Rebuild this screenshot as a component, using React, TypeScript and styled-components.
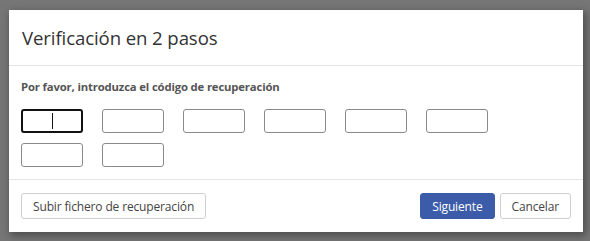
import React from "react";
import styled, {createGlobalStyle} from "styled-components";

const GlobalStyle = createGlobalStyle`
  html, body {
    margin: 0;
    padding: 0;
    background: #767676;
    font-family: "Open Sans", "Noto Sans", sans-serif;
  }
`

const Backdrop = styled.div`
  width: 590px;
  height: 241px;
  padding: 10px 0 0 9px;
  box-sizing: border-box;
`

const Dialog = styled.div`
  width: 574px;
  height: 222px;
  background: #fff;
  box-shadow: 2px 3px 8px 1px rgba(0, 0, 0, 0.35);
  display: flex;
  flex-direction: column;
`

const Header = styled.div`
  height: 56px;
  flex-shrink: 0;
  padding: 0 13px;
  display: flex;
  align-items: center;
  border-bottom: 1px solid #e5e5e5;
  box-sizing: border-box;
`

const Title = styled.h1`
  margin: 0;
  font-size: 18.6px;
  font-weight: 400;
  color: #333;
  letter-spacing: -0.1px;
`

const Body = styled.div`
  padding: 13px 12px 12px;
  border-bottom: 1px solid #e5e5e5;
`

const Label = styled.div`
  font-size: 11.3px;
  line-height: 16px;
  font-weight: 700;
  color: #555;
  margin-bottom: 14px;
  letter-spacing: -0.15px;
`

const CodeGrid = styled.div`
  display: grid;
  grid-template-columns: repeat(6, 62px);
  grid-auto-rows: 24px;
  column-gap: 19px;
  row-gap: 10px;
`

const CodeBox = styled.div<{ $active?: boolean }>`
  border: 1px solid ${p => p.$active ? "#111" : "#8a8a8a"};
  border-width: ${p => p.$active ? "2px" : "1px"};
  border-radius: 3px;
  box-sizing: border-box;
  display: flex;
  align-items: center;
  justify-content: center;
`

const Caret = styled.span`
  width: 1px;
  height: 16px;
  background: #111;
`

const Footer = styled.div`
  flex: 1;
  padding: 0 12px;
  display: flex;
  align-items: center;
  gap: 5px;
  box-sizing: border-box;
`

const Spacer = styled.div`
  flex: 1;
`

const Button = styled.button<{ $primary?: boolean }>`
  height: 26px;
  padding: 0 11px;
  font-family: inherit;
  font-size: 12px;
  border-radius: 3px;
  border: 1px solid ${p => p.$primary ? "#3a5ba8" : "#cfcfcf"};
  background: ${p => p.$primary ? "#3c5ca9" : "#fff"};
  color: ${p => p.$primary ? "#fff" : "#444"};
  letter-spacing: -0.15px;
`

const App: React.FC = () => {
  const boxes = _range(8);
  return (
    <>
      <GlobalStyle/>
      <Backdrop>
        <Dialog>
          <Header>
            <Title>Verificación en 2 pasos</Title>
          </Header>
          <Body>
            <Label>Por favor, introduzca el código de recuperación</Label>
            <CodeGrid>
              {boxes.map(i => (
                <CodeBox key={i} $active={i === 0}>
                  {i === 0 && <Caret/>}
                </CodeBox>
              ))}
            </CodeGrid>
          </Body>
          <Footer>
            <Button>Subir fichero de recuperación</Button>
            <Spacer/>
            <Button $primary>Siguiente</Button>
            <Button>Cancelar</Button>
          </Footer>
        </Dialog>
      </Backdrop>
    </>
  );
};

function _range(n: number) {
  return Array.from({length: n}, (_, i) => i);
}

export default App;
